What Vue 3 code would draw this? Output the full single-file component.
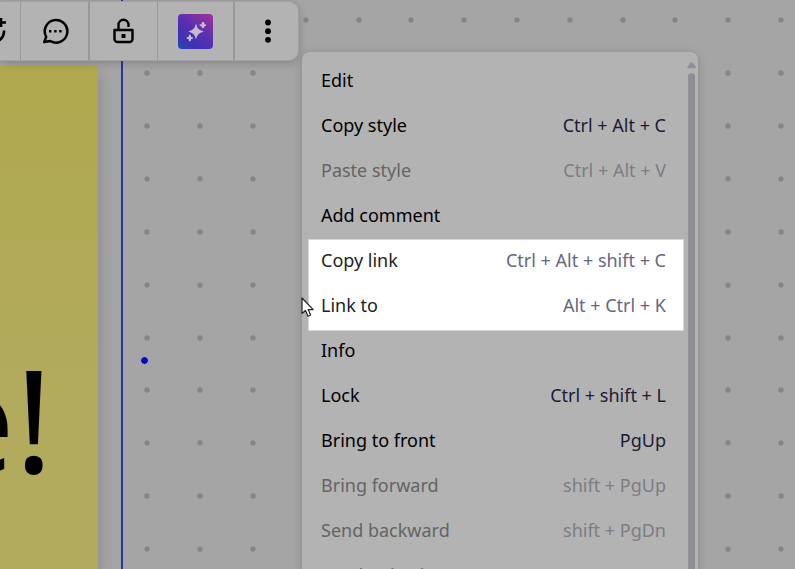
<script setup>
const dots = []
for (let col = 0; col < 40; col++) {
  for (let row = 0; row < 30; row++) {
    dots.push({ id: `${col}-${row}`, x: Math.round(147.4 + col * 52.8), y: Math.round(20.4 + row * 52.85) })
  }
}

const groups = [
  {
    name: 'edit',
    items: [
      { label: 'Edit' },
      { label: 'Copy style', keys: 'Ctrl + Alt + C' },
      { label: 'Paste style', keys: 'Ctrl + Alt + V', disabled: true },
      { label: 'Add comment' },
    ],
  },
  {
    name: 'link',
    spotlight: true,
    items: [
      { label: 'Copy link', keys: 'Ctrl + Alt + shift + C' },
      { label: 'Link to', keys: 'Alt + Ctrl + K' },
    ],
  },
  {
    name: 'arrange',
    items: [
      { label: 'Info' },
      { label: 'Lock', keys: 'Ctrl + shift + L' },
      { label: 'Bring to front', keys: 'PgUp' },
      { label: 'Bring forward', keys: 'shift + PgUp', disabled: true },
      { label: 'Send backward', keys: 'shift + PgDn', disabled: true },
      { label: 'Send to back', disabled: true },
    ],
  },
]
</script>

<template>
  <main class="board">
    <svg class="grid" aria-hidden="true">
      <circle v-for="d in dots" :key="d.id" :cx="d.x" :cy="d.y" r="2.7" />
    </svg>

    <div class="note"><span class="note-text">e!</span></div>
    <div class="selection"></div>
    <span class="handle"></span>

    <div class="toolbar" role="toolbar" aria-label="Sticky note">
      <button class="tool first" type="button" aria-label="Add reaction">
        <svg width="26" height="26" viewBox="0 0 26 26" fill="none" stroke="currentColor" stroke-width="2.6">
          <path d="M21 -1v10M16 4.500h10M24 12.500a11 11 0 0 1-5 10" />
        </svg>
      </button>
      <button class="tool comment" type="button" aria-label="Comment">
        <svg width="28" height="28" viewBox="0 0 28 28">
          <path d="M5.200 19.800A11.300 11.300 0 1 1 9.300 24L3.200 25.100L5.200 19.800Z" fill="none" stroke="currentColor" stroke-width="2.500" stroke-linejoin="round" />
          <path d="M8 13h2.400v2.400H8zM13.200 13h2.400v2.400h-2.400zM18.200 13h2.400v2.400h-2.400z" fill="currentColor" />
        </svg>
      </button>
      <button class="tool lock" type="button" aria-label="Unlock">
        <svg width="28" height="28" viewBox="0 0 28 28">
          <path d="M8.500 13V7.800a5 5 0 0 1 10 0V10" fill="none" stroke="currentColor" stroke-width="2.400" />
          <path d="M4.500 13h18v9a3 3 0 0 1-3 3h-12a3 3 0 0 1-3-3z" fill="none" stroke="currentColor" stroke-width="2.400" stroke-linejoin="round" />
          <path d="M11.500 17h4v4h-4z" fill="currentColor" />
        </svg>
      </button>
      <button class="tool ai" type="button" aria-label="AI actions">
        <span class="ai-tile">
          <svg width="35" height="35" viewBox="0 0 35 35" fill="currentColor">
            <path d="M18 9.500C19.600 14.800 20.400 15.700 25.700 17.400C20.400 19.200 19.600 20.200 18 25.300C16.400 20.200 15.600 19.200 10.300 17.400C15.600 15.700 16.400 14.800 18 9.500Z" />
            <path d="M24 8h2l.4 2.200L28 10.500v1.500l-1.600.3L26 14h-2l-.4-1.700-2-.3v-1.500l2-.3zM11 20.700h1.600l.5 2.200 1.800.4v1.500l-1.800.3-.5 2.100H11l-.5-2.100-1.800-.3v-1.500l1.800-.4z" />
          </svg>
        </span>
      </button>
      <button class="tool more" type="button" aria-label="More">
        <svg width="6" height="26" viewBox="0 0 6 26" fill="currentColor">
          <circle cx="3" cy="4.500" r="2.900" /><circle cx="3" cy="13.200" r="2.900" /><circle cx="3" cy="21.800" r="2.900" />
        </svg>
      </button>
    </div>

    <div class="menu" role="menu">
      <div v-for="g in groups" :key="g.name" class="group" :class="{ spotlight: g.spotlight }">
        <button v-for="i in g.items" :key="i.label" class="item" type="button" role="menuitem" :disabled="i.disabled">
          <span>{{ i.label }}</span>
          <span v-if="i.keys" class="keys">{{ i.keys }}</span>
        </button>
      </div>
      <div class="scrollbar" aria-hidden="true">
        <svg width="9" height="7" viewBox="0 0 9 7"><path d="M3.400.8q1.100-1.200 2.200 0l3 4q.6 1.400-.8 1.400H1.200q-1.400 0-.8-1.400z" /></svg>
        <span class="thumb"></span>
      </div>
    </div>

    <svg class="cursor" width="14" height="21" viewBox="0 0 14 21" aria-hidden="true">
      <path d="M1 1V16.500L4.500 13.500L7 19.200L9.600 18L7.200 12.600H12.200Z" fill="#fff" stroke="#222" stroke-width="1.200" stroke-linejoin="round" />
    </svg>
  </main>
</template>

<style>
body {
  background: #a5a5a5;
}
</style>

<style scoped>
.board {
  position: relative;
  height: 100vh;
  overflow: hidden;
  background: #a5a5a5;
  font-family: "Noto Sans", "Liberation Sans", sans-serif;
  color: #000;
}
.grid {
  position: absolute;
  inset: 0;
  width: 100%;
  height: 100%;
  fill: #868686;
}
.note {
  position: absolute;
  top: 66px;
  bottom: 0;
  left: 0;
  width: 98px;
  background: linear-gradient(#b0a84e, #b2ab5e 75%);
  box-shadow: 2px 8px 14px rgba(0, 0, 0, 0.16);
}
.note-text {
  position: absolute;
  top: 255px;
  right: 45px;
  font-size: 142px;
  line-height: 194px;
  white-space: nowrap;
}
.selection {
  position: absolute;
  top: 0;
  bottom: 0;
  left: 0;
  width: 121px;
  border-right: 2px solid #2336a0;
}
.handle {
  position: absolute;
  top: 356px;
  left: 140px;
  width: 7px;
  height: 7px;
  border: 1px solid #b5b5cc;
  border-radius: 50%;
  background: #0010b0;
}
.toolbar {
  position: absolute;
  top: 1px;
  left: 0;
  display: flex;
  height: 58px;
  border: 1px solid #a0a0a5;
  border-left: 0;
  border-radius: 0 10px 10px 0;
  background: #b3b3b3;
  box-shadow: 0 2px 8px rgba(0, 0, 0, 0.2);
}
.tool {
  display: flex;
  align-items: center;
  justify-content: center;
  box-sizing: border-box;
  width: 69px;
  padding: 0;
  border: 0;
  border-right: 1px solid #98989f;
  background: none;
  color: #000;
}
.tool.first {
  width: 21px;
  justify-content: flex-end;
  overflow: hidden;
}
.tool.first svg {
  flex: none;
  margin-right: 14px;
}
.tool.comment {
  border-right-width: 2px;
}
.tool.lock {
  width: 68px;
}
.tool.ai {
  width: 77px;
  border-right-width: 2px;
}
.tool.more {
  width: 63px;
  border-right: 0;
  padding-left: 2px;
}
.ai-tile {
  display: flex;
  border-radius: 4px;
  color: #c4bccb;
  background: linear-gradient(35deg, #1f4cb0, #4030b4 25%, #5a30b0 55%, #9430a0 90%);
}
.menu {
  position: absolute;
  top: 52px;
  left: 302px;
  box-sizing: border-box;
  width: 396px;
  padding: 5px 14px 5px 6px;
  border-radius: 8px;
  background: #b3b3b3;
  box-shadow: 0 2px 10px rgba(0, 0, 0, 0.18);
}
.group {
  position: relative;
}
.spotlight::before {
  content: "";
  position: absolute;
  inset: 2px 0 -4px;
  border: 1px solid #d8d8d8;
  background: #fff;
}
.item {
  position: relative;
  display: flex;
  align-items: center;
  justify-content: space-between;
  width: 100%;
  height: 45px;
  padding: 0 18px 0 13px;
  border: 0;
  background: none;
  color: #000;
  font-family: inherit;
  font-size: 18px;
  line-height: 24px;
  text-align: left;
}
.keys {
  color: #1b1b36;
}
.spotlight .item {
  color: #222;
}
.spotlight .keys {
  color: #656782;
}
.item:disabled {
  color: #646464;
}
.item:disabled .keys {
  color: #7d7d84;
}
.scrollbar {
  position: absolute;
  top: 10px;
  right: 2px;
  bottom: 0;
  display: flex;
  flex-direction: column;
  align-items: center;
  gap: 4px;
  fill: #8e8e9a;
}
.scrollbar svg {
  flex: none;
}
.thumb {
  flex: 1;
  width: 7px;
  border-radius: 4px;
  background: #8e8e9a;
}
.cursor {
  position: absolute;
  top: 297px;
  left: 301px;
}
</style>
